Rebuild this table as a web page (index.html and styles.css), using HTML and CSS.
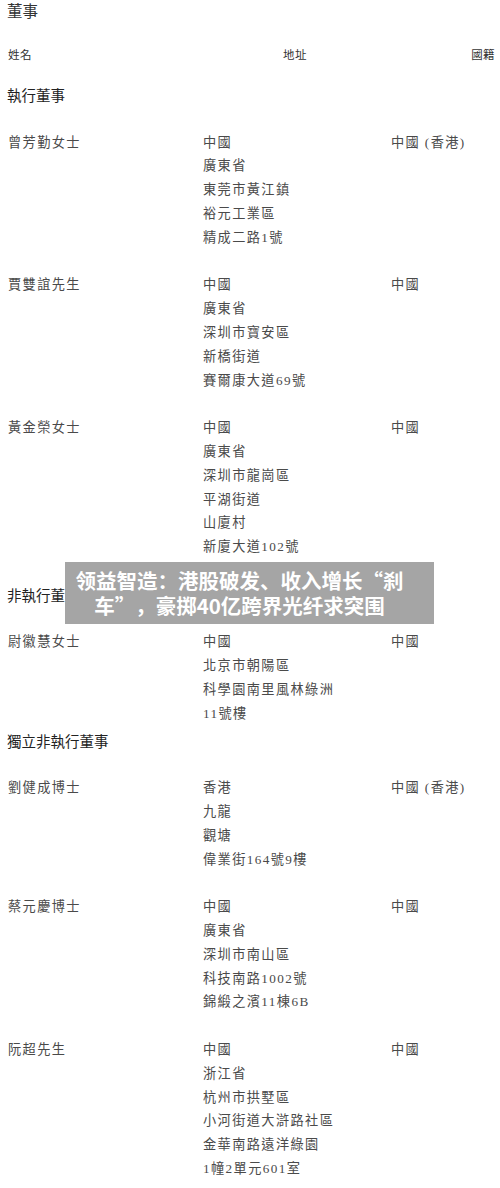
FILE: index.html
```html
<!DOCTYPE html>
<html lang="zh-Hant">
<head>
<meta charset="utf-8">
<title>董事</title>
<link rel="stylesheet" href="styles.css">
</head>
<body>
<div class="page">
  <div class="title">董事</div>
  <div class="colhead">
    <span>姓名</span>
    <span>地址</span>
    <span>國籍</span>
  </div>

  <div class="section-title">執行董事</div>

  <div class="entry">
    <div class="name">曾芳勤女士</div>
    <div class="addr">
      <div>中國</div>
      <div>廣東省</div>
      <div>東莞市黃江鎮</div>
      <div>裕元工業區</div>
      <div>精成二路1號</div>
    </div>
    <div class="nat">中國 (香港)</div>
  </div>

  <div class="entry">
    <div class="name">賈雙誼先生</div>
    <div class="addr">
      <div>中國</div>
      <div>廣東省</div>
      <div>深圳市寶安區</div>
      <div>新橋街道</div>
      <div>賽爾康大道69號</div>
    </div>
    <div class="nat">中國</div>
  </div>

  <div class="entry">
    <div class="name">黃金榮女士</div>
    <div class="addr">
      <div>中國</div>
      <div>廣東省</div>
      <div>深圳市龍崗區</div>
      <div>平湖街道</div>
      <div>山廈村</div>
      <div>新廈大道102號</div>
    </div>
    <div class="nat">中國</div>
  </div>

  <div class="section-title">非執行董事</div>

  <div class="entry entry-tight">
    <div class="name">尉徽慧女士</div>
    <div class="addr">
      <div>中國</div>
      <div>北京市朝陽區</div>
      <div>科學園南里風林綠洲</div>
      <div>11號樓</div>
    </div>
    <div class="nat">中國</div>
  </div>

  <div class="section-title">獨立非執行董事</div>

  <div class="entry">
    <div class="name">劉健成博士</div>
    <div class="addr">
      <div>香港</div>
      <div>九龍</div>
      <div>觀塘</div>
      <div>偉業街164號9樓</div>
    </div>
    <div class="nat">中國 (香港)</div>
  </div>

  <div class="entry">
    <div class="name">蔡元慶博士</div>
    <div class="addr">
      <div>中國</div>
      <div>廣東省</div>
      <div>深圳市南山區</div>
      <div>科技南路1002號</div>
      <div>錦緞之濱11棟6B</div>
    </div>
    <div class="nat">中國</div>
  </div>

  <div class="entry">
    <div class="name">阮超先生</div>
    <div class="addr">
      <div>中國</div>
      <div>浙江省</div>
      <div>杭州市拱墅區</div>
      <div>小河街道大滸路社區</div>
      <div>金華南路遠洋綠園</div>
      <div>1幢2單元601室</div>
    </div>
    <div class="nat">中國</div>
  </div>

  <div class="banner" lang="zh-Hans">领益智造：港股破发、收入增长“刹<br>车”，豪掷40亿跨界光纤求突围</div>
</div>
</body>
</html>
```

FILE: styles.css
```css
html, body {
  margin: 0;
  padding: 0;
  background: #ffffff;
}

.page {
  position: relative;
  width: 500px;
  height: 1188px;
  overflow: hidden;
  padding: 0 5px 0 8px;
  box-sizing: border-box;
  font-family: "Noto Sans CJK TC", "Noto Sans CJK SC", sans-serif;
  color: #333333;
}

.title {
  font-size: 15.5px;
  line-height: 20px;
  color: #333333;
  margin-left: -1px;
}

.colhead {
  display: grid;
  grid-template-columns: 275px 1fr auto;
  margin-top: 24px;
  font-size: 11.5px;
  line-height: 20px;
  letter-spacing: 0.4px;
  color: #333333;
}

.section-title {
  margin-top: 19px;
  margin-bottom: 23.8px;
  font-size: 14.5px;
  line-height: 23.8px;
  color: #222222;
  margin-left: -1px;
}

.entry + .section-title {
  margin-top: 0;
}

.entry {
  display: grid;
  grid-template-columns: 195px 188px 1fr;
  margin-bottom: 23.8px;
  font-family: "Liberation Serif", "Noto Sans CJK TC", serif;
  font-size: 13.2px;
  line-height: 23.8px;
  letter-spacing: 1.4px;
  color: #4a4a4a;
}

.entry-tight {
  margin-bottom: 3.2px;
}

.banner {
  position: absolute;
  left: 65px;
  top: 562px;
  width: 369px;
  height: 62px;
  box-sizing: border-box;
  padding: 5.5px 28px 0 8px;
  background: #a5a5a5;
  color: #ffffff;
  font-family: "Noto Sans CJK SC", sans-serif;
  font-weight: 700;
  font-size: 20.5px;
  line-height: 25px;
  text-align: center;
  white-space: nowrap;
  text-spacing-trim: space-all;
}
```
